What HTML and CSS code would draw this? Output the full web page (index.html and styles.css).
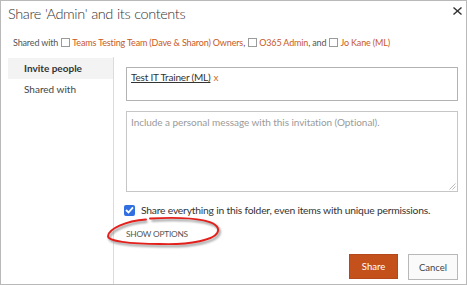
FILE: index.html
```html
<!DOCTYPE html>
<html>
<head>
<meta charset="utf-8">
<link rel="stylesheet" href="styles.css">
</head>
<body>
<div class="dialog">
  <div class="header">
    <h1 class="title">Share 'Admin' and its contents</h1>
    <svg class="close" width="9" height="8" viewBox="0 0 9 8"><path d="M0.5 0.5 L8.5 7.5 M8.5 0.5 L0.5 7.5" stroke="#333" stroke-width="1.4" fill="none"/></svg>
  </div>
  <div class="shared">
    <span class="muted">Shared with</span>
    <span class="box"></span><span class="link">Teams Testing Team (Dave &amp; Sharon) Owners</span><span class="muted">,</span>
    <span class="box"></span><span class="link">O365 Admin</span><span class="muted">, and</span>
    <span class="box"></span><span class="link">Jo Kane (ML)</span>
  </div>
  <div class="main">
    <nav class="nav">
      <div class="nav-item active">Invite people</div>
      <div class="nav-item">Shared with</div>
    </nav>
    <div class="content">
      <div class="people">
        <span class="person">Test IT Trainer (ML)</span><span class="remove">x</span>
      </div>
      <div class="message">
        <span class="placeholder">Include a personal message with this invitation (Optional).</span>
        <svg class="grip" width="7" height="7" viewBox="0 0 7 7"><path d="M6.5 0.5 L0.5 6.5 M6.5 3.5 L3.5 6.5" stroke="#aaa" stroke-width="0.8" fill="none"/></svg>
      </div>
      <label class="check-row">
        <span class="checkbox"><svg width="9" height="8" viewBox="0 0 9 8"><path d="M1 4 L3.5 6.5 L8 1.3" stroke="#fff" stroke-width="1.8" fill="none"/></svg></span>
        <span class="check-text">Share everything in this folder, even items with unique permissions.</span>
      </label>
      <div class="options">SHOW OPTIONS</div>
      <div class="buttons">
        <button class="btn primary">Share</button>
        <button class="btn secondary">Cancel</button>
      </div>
    </div>
  </div>
  <svg class="annotation" width="130" height="40" viewBox="0 0 130 40">
    <defs>
      <filter id="sh" x="-20%" y="-40%" width="140%" height="180%">
        <feGaussianBlur stdDeviation="1"/>
      </filter>
    </defs>
    <path d="M50 6.5 C100 4 120 10 118 19 C116 28 90 33 60 32 C30 32 7 29 8 24 C9 17 25 9 46 7.5" stroke="#8a8a8a" stroke-width="2.4" fill="none" filter="url(#sh)" transform="translate(1.5,2)" opacity="0.8"/>
    <path d="M50 6.5 C100 4 120 10 118 19 C116 28 90 33 60 32 C30 32 7 29 8 24 C9 17 25 9 46 7.5" stroke="#e3201c" stroke-width="1.9" fill="none" stroke-linecap="round"/>
  </svg>
</div>
</body>
</html>
```
FILE: styles.css
```css
html, body {
  margin: 0;
  padding: 0;
  background: #fff;
}
body {
  font-family: Lato, "Open Sans", sans-serif;
  color: #333;
}
.dialog {
  position: relative;
  width: 467px;
  height: 285px;
  box-sizing: border-box;
  border: 1px solid #b9b9b9;
  display: flex;
  flex-direction: column;
  overflow: hidden;
}
.header {
  display: flex;
  justify-content: space-between;
  align-items: flex-start;
  padding: 2px 4px 0 7px;
  height: 27px;
}
.title {
  margin: 0;
  font-weight: 300;
  font-size: 14.5px;
  letter-spacing: -0.4px;
  word-spacing: 0.5px;
  line-height: 22px;
  color: #333;
}
.close {
  margin-top: 4px;
}
.shared {
  padding: 6px 0 0 12px;
  font-size: 9px;
  letter-spacing: -0.15px;
  line-height: 14px;
  height: 21px;
  white-space: nowrap;
}
.muted {
  color: #555;
}
.box {
  display: inline-block;
  width: 7px;
  height: 7px;
  border: 1px solid #9a9a9a;
  vertical-align: -1px;
  margin: 0 2px 0 1px;
}
.link {
  color: #c8591d;
}
.main {
  flex: 1;
  display: flex;
  padding-left: 7px;
}
.nav {
  flex: 0 0 105px;
  border-right: 1px solid #dcdcdc;
  padding-top: 1px;
}
.nav-item {
  height: 21px;
  line-height: 21px;
  font-size: 10px;
  padding-left: 16px;
  color: #444;
  white-space: nowrap;
}
.nav-item.active {
  background: #f3f3f3;
  font-weight: 700;
  color: #333;
}
.content {
  flex: 1;
  min-width: 0;
  padding: 10px 8px 0 12px;
  display: flex;
  flex-direction: column;
}
.people {
  height: 34px;
  box-sizing: border-box;
  border: 1px solid #b3b3b3;
  padding: 1px 4px;
  font-size: 10px;
  letter-spacing: -0.2px;
  line-height: 16px;
}
.person {
  color: #333;
  text-decoration: underline;
}
.remove {
  color: #d0692f;
  margin-left: 3px;
}
.message {
  position: relative;
  margin-top: 10px;
  height: 81px;
  box-sizing: border-box;
  border: 1px solid #c6c6c6;
  padding: 3px 4px;
  font-size: 10px;
  letter-spacing: -0.05px;
  line-height: 14px;
}
.placeholder {
  color: #9a9a9a;
}
.grip {
  position: absolute;
  right: 1px;
  bottom: 1px;
}
.check-row {
  display: flex;
  align-items: center;
  margin-top: 11px;
  height: 14px;
}
.checkbox {
  flex: 0 0 11px;
  width: 11px;
  height: 11px;
  border-radius: 2px;
  background: #2f6fe0;
  display: flex;
  align-items: center;
  justify-content: center;
  margin-left: -2px;
  margin-right: 6px;
}
.check-text {
  font-size: 10.3px;
  letter-spacing: -0.2px;
  color: #333;
  white-space: nowrap;
}
.options {
  margin-top: 11px;
  font-size: 8.3px;
  letter-spacing: -0.2px;
  color: #555;
  line-height: 12px;
}
.buttons {
  display: flex;
  justify-content: flex-end;
  gap: 10px;
  margin-top: 14px;
}
.btn {
  font-family: Lato, "Open Sans", sans-serif;
  font-size: 9.5px;
  height: 25px;
  padding: 0;
  border-radius: 0;
}
.btn.primary {
  width: 49px;
  background: #c4511c;
  color: #fff;
  border: 1px solid #b5481a;
}
.btn.secondary {
  width: 50px;
  height: 26px;
  background: #fafafa;
  color: #444;
  border: 1px solid #b8b8b8;
}
.annotation {
  position: absolute;
  left: 99px;
  top: 211px;
}
```
